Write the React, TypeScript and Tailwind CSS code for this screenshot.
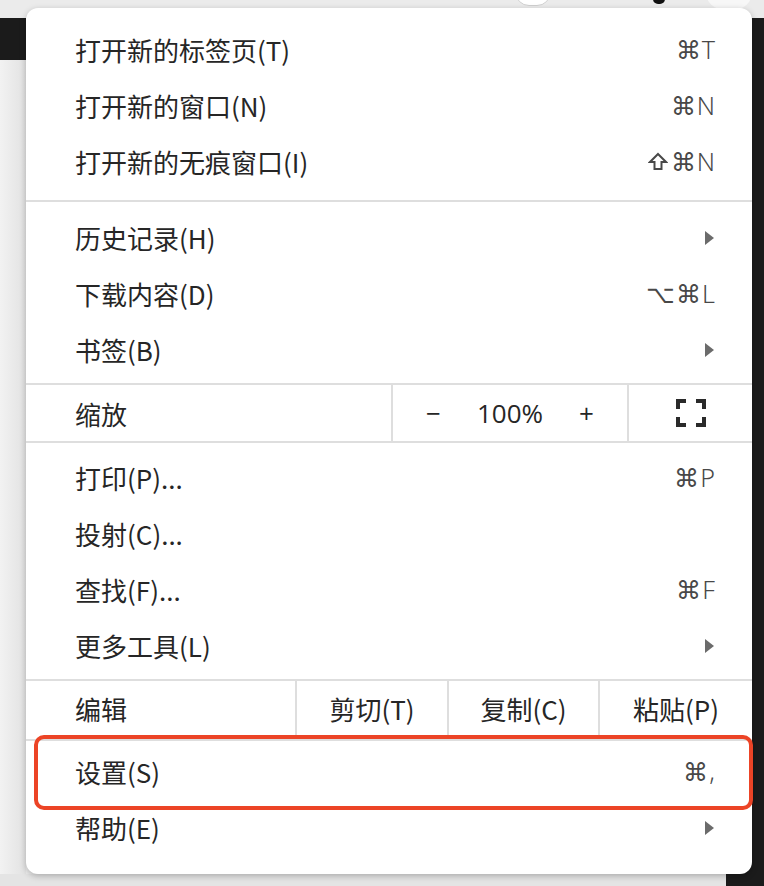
import type { ReactNode } from "react";

const FONT = { fontFamily: '"Noto Sans CJK SC", "Noto Sans", sans-serif' };

function Arrow() {
  return (
    <svg width="11" height="16" viewBox="0 0 11 16" className="mr-[1px]">
      <path d="M1 1 L10 8 L1 15 Z" fill="#6b6b6b" />
    </svg>
  );
}

function Shortcut({ children }: { children: ReactNode }) {
  return (
    <span
      className="text-[25px] text-[#484848] tracking-[1px] flex items-center"
      style={{ fontFamily: '"Noto Sans", "DejaVu Sans", sans-serif', fontWeight: 300 }}
    >
      {children}
    </span>
  );
}

// outline shift arrow, the font one comes out too thin
function ShiftGlyph() {
  return (
    <svg width="20" height="20" viewBox="0 0 20 20" className="mr-[3px]">
      <path d="M10 2 L18 10 H13.5 V17 H6.5 V10 H2 Z" fill="none" stroke="#484848" strokeWidth="2" strokeLinejoin="miter" />
    </svg>
  );
}

function MenuRow({ label, right }: { label: string; right?: ReactNode }) {
  return (
    <div className="h-[56px] flex items-center justify-between pl-[49px] pr-[36px] pb-[5px]">
      <span className="text-[26px] text-[#262626]">{label}</span>
      {right}
    </div>
  );
}

function Divider() {
  return <div className="h-[2px] bg-[#dedede]" />;
}

function FullscreenIcon() {
  return (
    <svg width="30" height="28" viewBox="0 0 30 28">
      <g fill="none" stroke="#2a2a2a" strokeWidth="4" strokeLinecap="butt">
        <path d="M2 10 V2 H10" />
        <path d="M20 2 H28 V10" />
        <path d="M28 18 V26 H20" />
        <path d="M10 26 H2 V18" />
      </g>
    </svg>
  );
}

export default function App() {
  return (
    <div className="relative w-[764px] h-[886px] overflow-hidden bg-[#ebebeb]" style={FONT}>
      {/* backdrop */}
      <div className="absolute left-0 top-[18px] w-[26px] h-[42px] bg-[#1b1b1b]" />
      <div className="absolute left-0 top-[60px] w-[26px] h-[826px] bg-gradient-to-r from-[#f2f2f2] to-[#e2e2e2]" />
      <div className="absolute left-[726px] top-[18px] w-[38px] h-[868px] bg-[#1b1b1b]" />
      <div className="absolute left-[0px] top-[874px] w-[726px] h-[12px] bg-[#e4e4e4]" />
      <div className="absolute left-[515px] top-[-22px] w-[36px] h-[28px] rounded-full bg-white border border-[#d0d0d0]" />
      <div className="absolute left-[653px] top-[-6px] w-[12px] h-[10px] rounded-full bg-[#111]" />
      <div className="absolute left-[705px] top-[-30px] w-[48px] h-[40px] rounded-full bg-[#f7f7f7]" />

      <div className="relative pl-[26px] pt-[8px]">
        <div className="w-[726px] h-[866px] bg-white rounded-[12px] overflow-hidden shadow-[0_2px_6px_rgba(0,0,0,0.25)]">
          <div className="pt-[16px] pb-[8px]">
            <MenuRow label="打开新的标签页(T)" right={<Shortcut>⌘T</Shortcut>} />
            <MenuRow label="打开新的窗口(N)" right={<Shortcut>⌘N</Shortcut>} />
            <MenuRow
              label="打开新的无痕窗口(I)"
              right={
                <Shortcut>
                  <ShiftGlyph />
                  ⌘N
                </Shortcut>
              }
            />
          </div>
          <Divider />
          <div className="pt-[10px] pb-[3px]">
            <MenuRow label="历史记录(H)" right={<Arrow />} />
            <MenuRow label="下载内容(D)" right={<Shortcut>⌥⌘L</Shortcut>} />
            <MenuRow label="书签(B)" right={<Arrow />} />
          </div>
          <Divider />
          <div className="h-[56px] flex">
            <div className="w-[367px] flex items-center pl-[49px] border-r-2 border-[#dedede]">
              <span className="text-[26px] text-[#262626]">缩放</span>
            </div>
            <div
              className="w-[236px] flex items-center justify-center gap-[36px] border-r-2 border-[#dedede] text-[26px] text-[#262626]"
              style={{ fontFamily: '"Open Sans", "Noto Sans", sans-serif' }}
            >
              <span>−</span>
              <span>100%</span>
              <span>+</span>
            </div>
            <div className="flex-1 flex items-center justify-center">
              <FullscreenIcon />
            </div>
          </div>
          <Divider />
          <div className="pt-[9px] pb-[3px]">
            <MenuRow label="打印(P)..." right={<Shortcut>⌘P</Shortcut>} />
            <MenuRow label="投射(C)..." />
            <MenuRow label="查找(F)..." right={<Shortcut>⌘F</Shortcut>} />
            <MenuRow label="更多工具(L)" right={<Arrow />} />
          </div>
          <Divider />
          <div className="h-[58px] flex text-[26px] text-[#262626]">
            <div className="w-[271px] flex items-center pl-[49px] pb-[3px] border-r-2 border-[#dedede]">编辑</div>
            <div className="w-[152px] flex items-center justify-center pb-[3px] border-r-2 border-[#dedede]">剪切(T)</div>
            <div className="w-[151px] flex items-center justify-center pb-[3px] border-r-2 border-[#dedede]">复制(C)</div>
            <div className="flex-1 flex items-center justify-center pb-[3px]">粘贴(P)</div>
          </div>
          <Divider />
          <div className="pt-[5px] pb-[16px]">
            <MenuRow label="设置(S)" right={<Shortcut>⌘,</Shortcut>} />
            <MenuRow label="帮助(E)" right={<Arrow />} />
          </div>
        </div>
        {/* highlight annotation */}
        <div className="absolute left-[34px] top-[735px] w-[719px] h-[75px] rounded-[10px] border-4 border-[#ec4426]" />
      </div>
    </div>
  );
}
